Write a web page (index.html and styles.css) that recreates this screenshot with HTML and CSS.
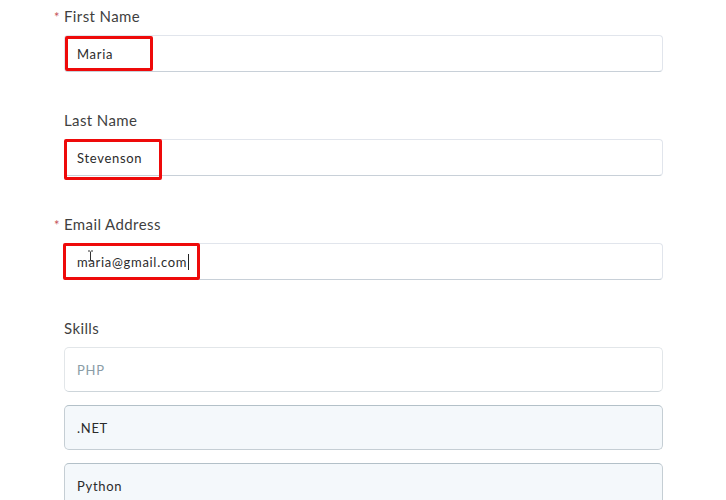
FILE: index.html
```html
<!DOCTYPE html>
<html lang="en">

<head>
    <meta charset="UTF-8">
    <meta name="viewport" content="width=device-width, initial-scale=1.0">
    <title>Form</title>
    <link rel="stylesheet" href="styles.css">
</head>

<body>
    <form class="form">
        <div class="field">
            <label class="label required">First Name</label>
            <div class="input">
                Maria
                <span class="mark mark-first"></span>
            </div>
        </div>

        <div class="field">
            <label class="label">Last Name</label>
            <div class="input">
                Stevenson
                <span class="mark mark-last"></span>
            </div>
        </div>

        <div class="field">
            <label class="label required">Email Address</label>
            <div class="input">
                <span>maria@gmail.com</span><span class="caret"></span>
                <span class="mark mark-email"></span>
                <svg class="ibeam" width="7" height="12" viewBox="0 0 7 12">
                    <path d="M1 1h2M4 1h2M3.5 1.5v9M1 11h2M4 11h2" stroke="#333" stroke-width="1" fill="none"/>
                </svg>
            </div>
        </div>

        <div class="field">
            <label class="label">Skills</label>
            <div class="skills">
                <div class="skill placeholder">PHP</div>
                <div class="skill filled">.NET</div>
                <div class="skill filled">Python</div>
            </div>
        </div>
    </form>
</body>

</html>
```

FILE: styles.css
```css
html {
    box-sizing: border-box;
}

*,
*::before,
*::after {
    box-sizing: inherit;
}

body {
    margin: 0;
    padding: 6px 0 0;
    background-color: #fff;
    font-family: Lato, "Noto Sans", sans-serif;
    color: #333;
}

.form {
    margin-left: 64px;
    width: 599px;
}

.field {
    margin-bottom: 38px;
}

.label {
    display: block;
    position: relative;
    height: 20px;
    line-height: 20px;
    margin-bottom: 9px;
    font-size: 15px;
    letter-spacing: 0.4px;
    color: #3f3f3f;
}

.label.required::before {
    content: '*';
    position: absolute;
    left: -10px;
    top: 1px;
    font-size: 13px;
    color: #c4545a;
}

.input {
    position: relative;
    display: flex;
    align-items: center;
    height: 37px;
    padding: 0 12px;
    border: 1px solid #e1e5ec;
    border-bottom-color: #c8d0d8;
    border-radius: 4px;
    font-size: 13px;
    letter-spacing: 0.7px;
    color: #2b2b2b;
}

.caret {
    display: inline-block;
    width: 1px;
    height: 16px;
    margin-left: 1px;
    background-color: #222;
}

.mark {
    position: absolute;
    border: 3px solid #ee0a0a;
    border-radius: 2px;
}

.mark-first {
    left: 0;
    top: 0;
    width: 88px;
    height: 35px;
}

.mark-last {
    left: -1px;
    top: -1px;
    width: 98px;
    height: 41px;
}

.mark-email {
    left: -2px;
    top: -1px;
    width: 137px;
    height: 37px;
}

.ibeam {
    position: absolute;
    left: 22px;
    top: 6px;
}

.skills {
    display: flex;
    flex-direction: column;
    gap: 13px;
}

.skill {
    display: flex;
    align-items: center;
    height: 45px;
    padding: 0 12px;
    border-radius: 5px;
    font-size: 13px;
    letter-spacing: 0.7px;
}

.skill.placeholder {
    border: 1px solid #e2e6e9;
    border-bottom-color: #cdd5da;
    color: #8a9ca6;
}

.skill.filled {
    border: 1px solid #c5ced4;
    border-top-color: #b3c0c8;
    background-color: #f4f8fb;
    color: #2b2b2b;
}
```
